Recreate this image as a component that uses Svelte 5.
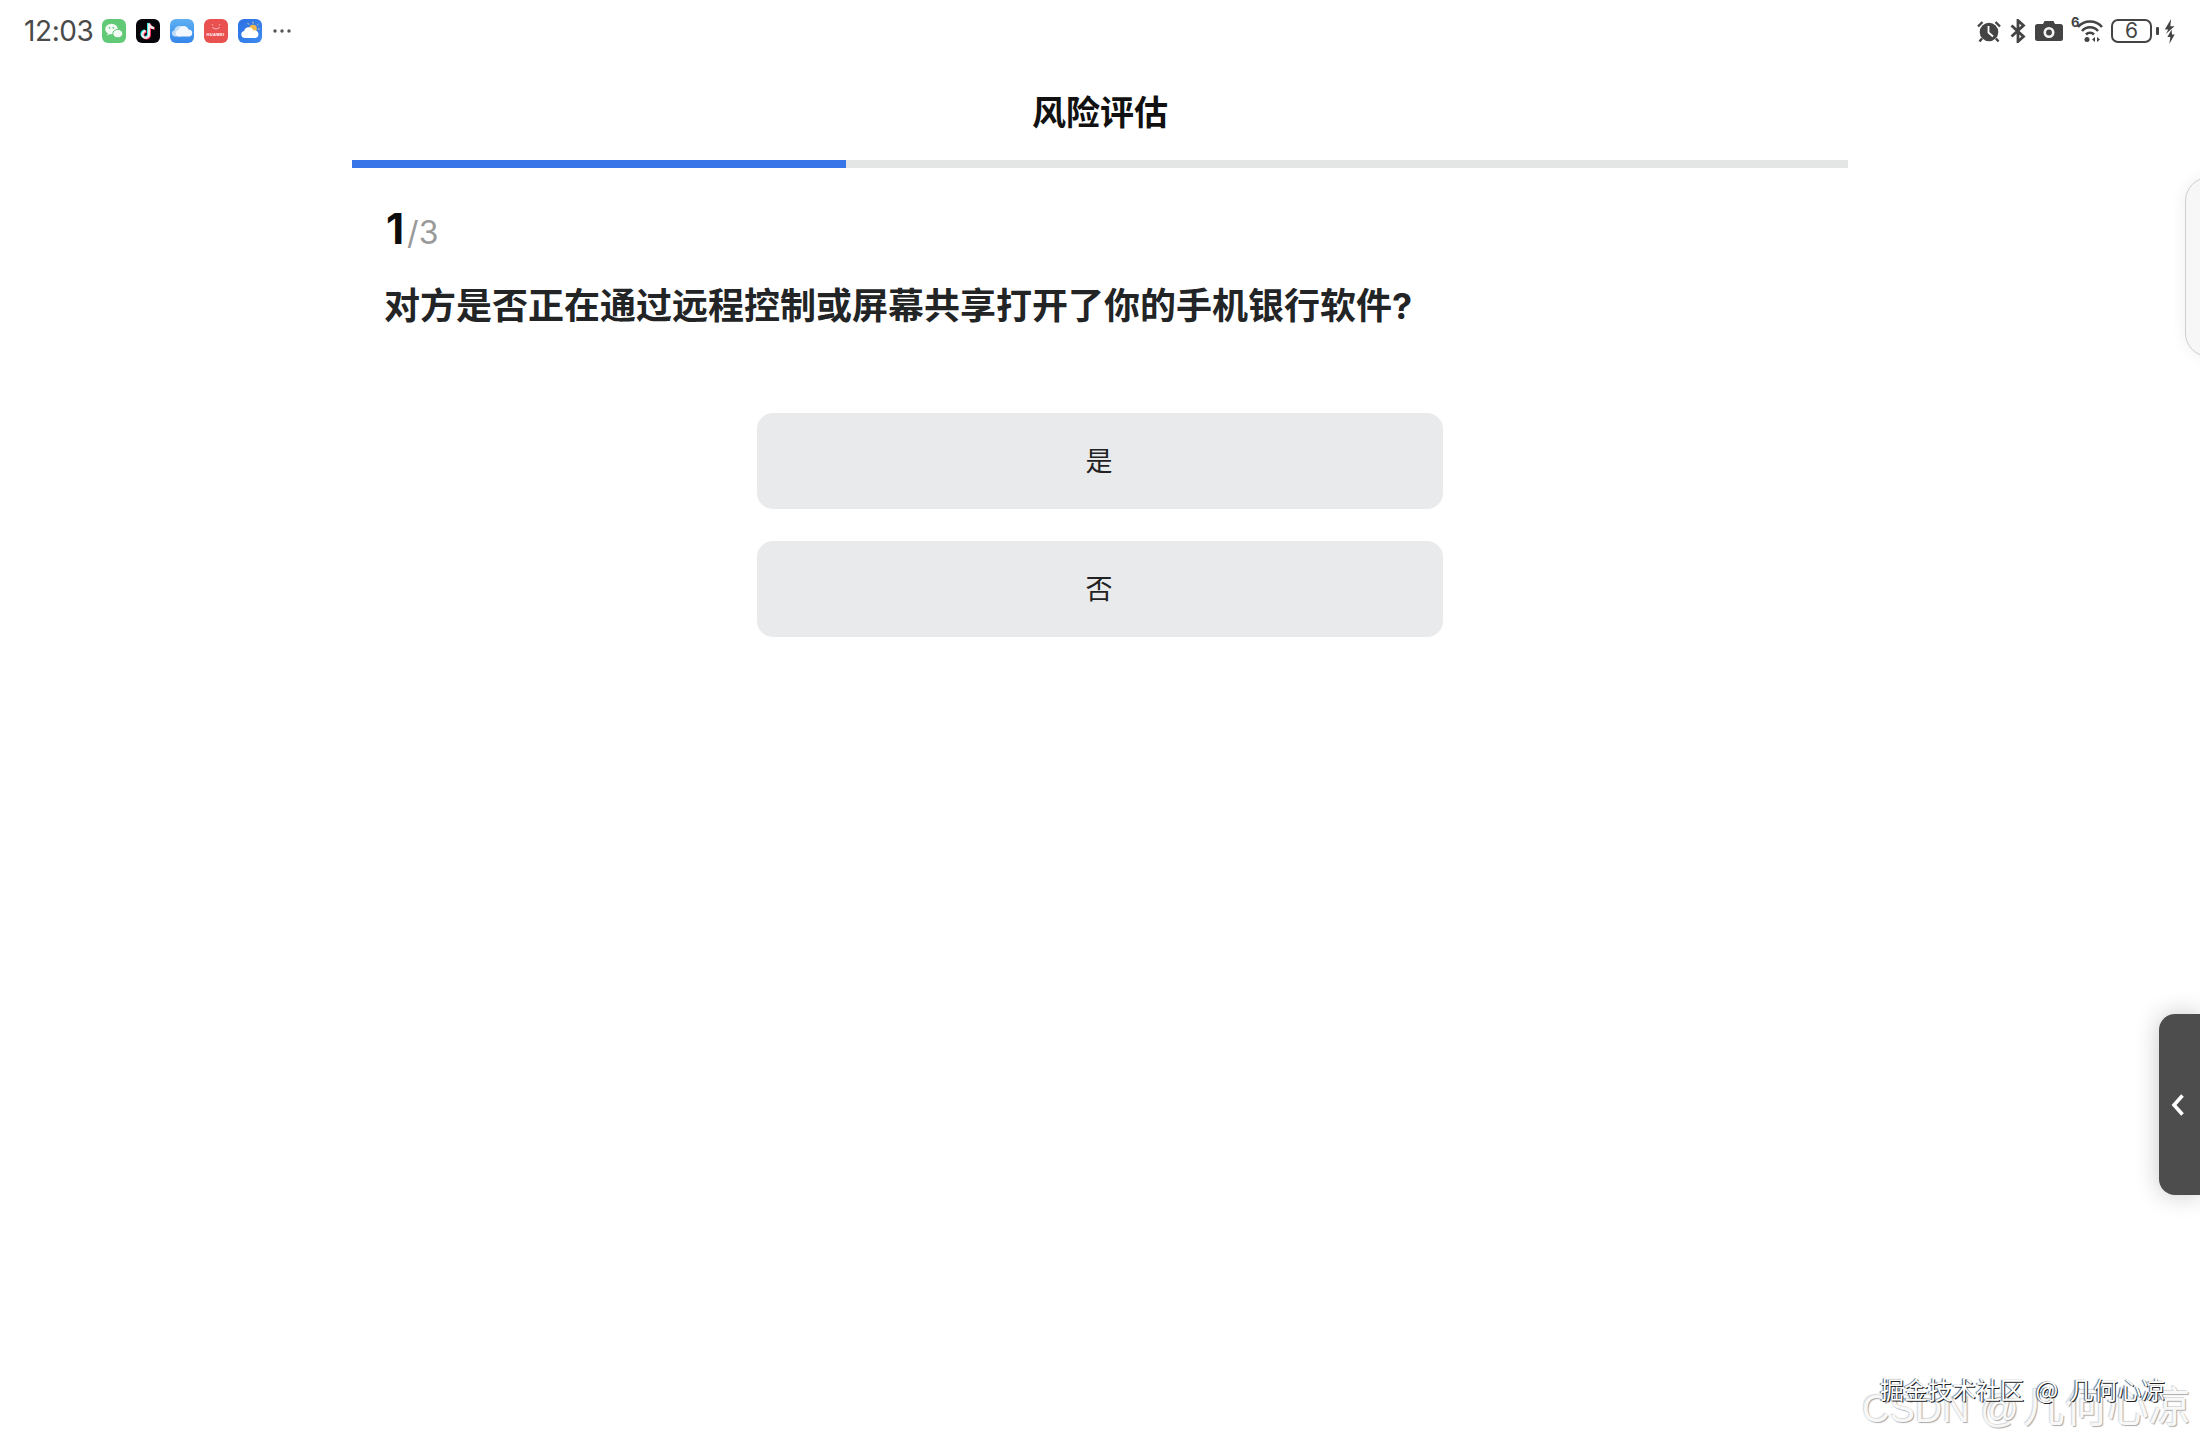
<script>
  const options = ['是', '否'];
</script>

<div class="page">
  <header class="status">
    <div class="status-left">
      <span class="time">12:03</span>
      <svg class="app" viewBox="0 0 24 24" aria-hidden="true">
        <rect width="24" height="24" rx="6" fill="#62c977" />
        <ellipse cx="9.500" cy="10" rx="6.300" ry="5.300" fill="#f4fbf5" />
        <path d="M6 14l-1 2.600 3-1.600z" fill="#f4fbf5" />
        <ellipse cx="15.800" cy="14.600" rx="5" ry="4.200" fill="#f4fbf5" stroke="#62c977" stroke-width="1" />
        <circle cx="7.600" cy="8.800" r=".9" fill="#62c977" />
        <circle cx="11.400" cy="8.800" r=".9" fill="#62c977" />
      </svg>
      <svg class="app" viewBox="0 0 24 24" aria-hidden="true">
        <rect width="24" height="24" rx="6" fill="#06060a" />
        <path d="M13 4.500V15.500a3.300 3.300 0 1 1-3.300-3.300M13 4.500c.4 2.800 2.200 4.300 5 4.600" fill="none" stroke="#25f4ee" stroke-width="2.400" transform="translate(-.8 -.5)" />
        <path d="M13 4.500V15.500a3.300 3.300 0 1 1-3.300-3.300M13 4.500c.4 2.800 2.200 4.300 5 4.600" fill="none" stroke="#fe2c55" stroke-width="2.400" transform="translate(.8 .5)" />
        <path d="M13 4.500V15.500a3.300 3.300 0 1 1-3.300-3.300M13 4.500c.4 2.800 2.200 4.300 5 4.600" fill="none" stroke="#f6e9ec" stroke-width="2.200" />
      </svg>
      <svg class="app" viewBox="0 0 24 24" aria-hidden="true">
        <defs>
          <linearGradient id="cloudBg" x1="0" y1="0" x2="0" y2="1">
            <stop offset="0" stop-color="#5eb0f2" />
            <stop offset="1" stop-color="#3585ea" />
          </linearGradient>
          <linearGradient id="skyBg" x1="0" y1="0" x2="1" y2="1">
            <stop offset="0" stop-color="#2a6fe4" />
            <stop offset="1" stop-color="#3f8bf0" />
          </linearGradient>
        </defs>
        <rect width="24" height="24" rx="6" fill="url(#cloudBg)" />
        <path d="M5 17.500a3.200 3.200 0 0 1-.6-6.300A5 5 0 0 1 13.800 9.500l-3 8z" fill="#bfdcf8" />
        <path d="M8.500 17.500a3.300 3.300 0 0 1 0-6.500 5.200 5.200 0 0 1 10-.4 3.500 3.500 0 0 1 1 6.900z" fill="#f2f8fe" />
      </svg>
      <div class="app huawei">
        <svg viewBox="0 0 24 10" aria-hidden="true">
          <path d="M8.500 5c.5 2.400 6.500 2.400 7 0" fill="none" stroke="#fbd7d7" stroke-width=".8" />
          <path d="M8 2l.8 1.500M16 2l-.8 1.500" stroke="#fbd7d7" stroke-width=".7" />
        </svg>
        <span>HUAWEI</span>
      </div>
      <svg class="app" viewBox="0 0 24 24" aria-hidden="true">
        <rect width="24" height="24" rx="6" fill="url(#skyBg)" />
        <circle cx="15" cy="9.500" r="3.800" fill="#f4b94a" />
        <path d="M15 2.800v1.700M20.500 5l-1.200 1.200M9.800 4.200l1 1.400M21.500 10h-1.600" stroke="#f6d98a" stroke-width="1" />
        <path d="M6.500 19a3.600 3.600 0 0 1-.4-7.100 4.800 4.800 0 0 1 9.200-.5 3.900 3.900 0 0 1 2.200 7.600z" fill="#fff" />
      </svg>
      <svg class="more" viewBox="0 0 18 4" aria-hidden="true">
        <circle cx="2" cy="2" r="1.700" />
        <circle cx="9" cy="2" r="1.700" />
        <circle cx="16" cy="2" r="1.700" />
      </svg>
    </div>
    <div class="status-right">
      <svg class="ic alarm" viewBox="0 0 24 22" aria-hidden="true">
        <circle cx="12" cy="12" r="9.300" fill="#444" />
        <path d="M11.500 6v6.500l4.500 4" fill="none" stroke="#fff" stroke-width="1.800" />
        <path d="M1 6.500l4.500-4.500M23 6.500l-4.500-4.500M5 18.500l-2.500 3M19 18.500l2.500 3" stroke="#444" stroke-width="2.400" fill="none" />
      </svg>
      <svg class="ic bt" viewBox="0 0 16 24" aria-hidden="true">
        <path d="M1.500 6.500l12 11-5.500 5V1.500l5.500 5-12 11" fill="none" stroke="#444" stroke-width="2.800" />
      </svg>
      <svg class="ic cam" viewBox="0 0 28 20" aria-hidden="true">
        <path d="M2.500 3H8l1.500-3h9L20 3h5.500A2.500 2.500 0 0 1 28 5.500v12a2.500 2.500 0 0 1-2.500 2.500h-23A2.500 2.500 0 0 1 0 17.500v-12A2.500 2.500 0 0 1 2.500 3z" fill="#444" />
        <circle cx="14" cy="11.500" r="4.200" fill="none" stroke="#f4f4f4" stroke-width="2.600" />
      </svg>
      <div class="wifi">
        <span>6</span>
        <svg viewBox="0 0 26 23" aria-hidden="true">
          <path d="M1 8c6.500-7.400 17.500-7.400 24 0M5 12c4.500-5 11.500-5 16 0M9 15.500c2.300-2.400 5.700-2.400 8 0" fill="none" stroke="#444" stroke-width="2.600" />
          <circle cx="10" cy="20.500" r="2.500" fill="#444" />
          <path d="M18 18v5l-3-2.500zM20 18v5l3-2.500z" fill="#444" />
        </svg>
      </div>
      <div class="battery"><span>6</span></div>
      <i class="nub"></i>
      <svg class="ic bolt" viewBox="0 0 10 24" aria-hidden="true">
        <path d="M6.500 0L.5 10H3.800L1.500 14.500 9.800 7H5.800zM7 10L3 17.300H5.800L4.800 24 10 14.800H7.400z" fill="#444" />
      </svg>
    </div>
  </header>

  <main class="main">
    <h1 class="title">风险评估</h1>
    <div class="progress"><div class="fill"></div></div>
    <section class="body">
      <p class="count"><b>1</b><span>/3</span></p>
      <h2 class="question">对方是否正在通过远程控制或屏幕共享打开了你的手机银行软件?</h2>
      <div class="options">
        {#each options as option}
          <button class="option" type="button">{option}</button>
        {/each}
      </div>
    </section>
  </main>

  <div class="edge-top"></div>
  <div class="edge-handle">
    <svg viewBox="0 0 14 24" aria-hidden="true">
      <path d="M11.500 2.500L3 12l8.500 9.500" fill="none" stroke="#fff" stroke-width="3.600" />
    </svg>
  </div>
  <div class="mark-csdn"><span>CSDN @</span>几何心凉</div>
  <div class="mark-juejin">掘金技术社区 @ 几何心凉</div>
</div>

<style>
  :global(body) {
    margin: 0;
    background: #fff;
  }

  .page {
    position: relative;
    width: 2200px;
    height: 1440px;
    overflow: hidden;
    background: #fff;
    font-family: Inter, "Noto Sans CJK SC", sans-serif;
    color: #222;
  }

  .status {
    height: 62px;
    padding: 0 25px 0 24px;
    display: flex;
    justify-content: space-between;
    align-items: center;
    box-sizing: border-box;
  }

  .status-left {
    display: flex;
    align-items: center;
    gap: 10px;
  }

  .time {
    font-size: 28px;
    line-height: 62px;
    color: #4a4a4a;
    margin-right: -2px;
    letter-spacing: -0.4px;
  }

  .app {
    width: 24px;
    height: 24px;
    display: block;
    flex: none;
  }

  .huawei {
    border-radius: 6px;
    background: #e95050;
    overflow: hidden;
    display: flex;
    flex-direction: column;
    align-items: center;
    justify-content: center;
  }

  .huawei svg {
    width: 24px;
    height: 10px;
  }

  .huawei span {
    font-size: 4px;
    line-height: 6px;
    font-weight: 700;
    color: #fff;
    letter-spacing: 0.3px;
    margin-bottom: 3px;
  }

  .more {
    width: 18px;
    height: 4px;
    margin-left: 1px;
    fill: #555;
  }

  .status-right {
    display: flex;
    align-items: center;
    gap: 0;
  }

  .ic {
    display: block;
    flex: none;
  }

  .alarm {
    width: 24px;
    height: 22px;
  }

  .bt {
    width: 16px;
    height: 24px;
    margin-left: 9px;
  }

  .cam {
    width: 28px;
    height: 20px;
    margin-left: 9px;
  }

  .wifi {
    position: relative;
    width: 32px;
    height: 24px;
    margin-left: 8px;
  }

  .wifi span {
    position: absolute;
    left: 0;
    top: -4px;
    font-size: 13px;
    line-height: 14px;
    color: #444;
    font-weight: 700;
  }

  .wifi svg {
    position: absolute;
    right: 0;
    top: 0;
    width: 26px;
    height: 23px;
  }

  .battery {
    width: 41px;
    height: 24px;
    margin-left: 8px;
    box-sizing: border-box;
    border: 2px solid #444;
    border-radius: 7px;
    display: flex;
    align-items: center;
    justify-content: center;
    font-size: 21px;
    line-height: 20px;
    color: #444;
  }

  .nub {
    display: block;
    width: 3px;
    height: 8px;
    margin-left: 4px;
    background: #444;
    border-radius: 1px;
  }

  .bolt {
    width: 11px;
    height: 25px;
    margin-left: 5px;
  }

  .main {
    width: 1496px;
    margin: 0 auto;
  }

  .title {
    margin: 0;
    height: 98px;
    line-height: 102px;
    text-align: center;
    font-size: 34px;
    font-weight: 700;
    color: #111;
  }

  .progress {
    height: 8px;
    background: #e4e6e6;
  }

  .fill {
    width: 33%;
    height: 100%;
    background: #3775e8;
  }

  .body {
    padding: 0 33px;
  }

  .count {
    margin: 39px 0 0;
    height: 44px;
    line-height: 44px;
    color: #999;
    font-size: 32px;
  }

  .count b {
    font-size: 42px;
    font-weight: 700;
    color: #0c0c0c;
    margin-left: 1px;
    margin-right: 3px;
  }

  .question {
    margin: 30px 0 0;
    font-size: 36px;
    line-height: 50px;
    font-weight: 700;
    color: #222426;
    margin-left: -1px;
    padding-bottom: 1px;
  }

  .options {
    width: 686px;
    margin: 81px auto 0 372px;
    display: flex;
    flex-direction: column;
    gap: 32px;
  }

  .option {
    height: 96px;
    border: 0;
    border-radius: 16px;
    background: #e9eaec;
    color: #222;
    padding: 0 2px 0 0;
    font: 400 27px/1 Inter, "Noto Sans CJK SC", sans-serif;
  }

  .edge-top {
    position: absolute;
    left: 2185px;
    top: 177px;
    width: 30px;
    height: 180px;
    box-sizing: border-box;
    border: 1px solid #cfcfcf;
    border-radius: 24px 0 0 24px;
    background: #f7f7f7;
    box-shadow: 0 0 16px rgba(0, 0, 0, 0.07);
  }

  .edge-handle {
    position: absolute;
    left: 2159px;
    top: 1014px;
    width: 41px;
    height: 181px;
    display: flex;
    align-items: center;
    padding-left: 12px;
    box-sizing: border-box;
    border-radius: 16px 0 0 16px;
    background: #4d4d4d;
    box-shadow: 0 0 24px rgba(0, 0, 0, 0.22);
  }

  .edge-handle svg {
    width: 14px;
    height: 24px;
  }

  .mark-csdn {
    position: absolute;
    left: 1862px;
    top: 1378px;
    white-space: nowrap;
    font: 400 42px/52px "Noto Sans CJK SC", sans-serif;
    color: #f8f8f8;
    text-shadow: 1px 1px 1px #a8a8a8, -1px -1px 1px #d8d8d8;
  }

  .mark-csdn span {
    font: 400 38px/52px "Liberation Sans", sans-serif;
    margin-right: 4px;
  }

  .mark-juejin {
    position: absolute;
    left: 1880px;
    top: 1373px;
    white-space: nowrap;
    font: 400 24px/32px "Noto Sans CJK SC", sans-serif;
    word-spacing: 6px;
    color: #fff;
    text-shadow: 1px 1px 0 #222, -1px 0 1px #555;
  }
</style>
